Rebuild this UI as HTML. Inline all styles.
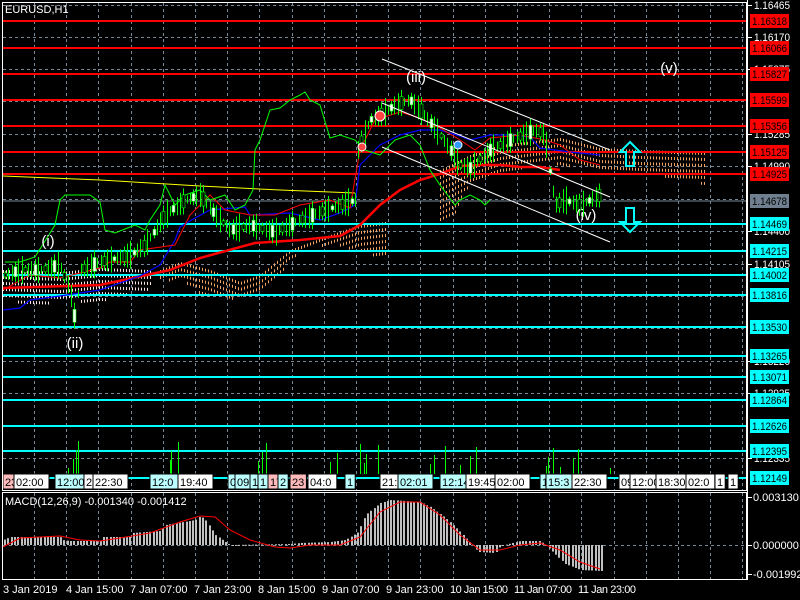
<!DOCTYPE html>
<html><head><meta charset="utf-8"><style>
html,body{margin:0;padding:0;background:#000;width:800px;height:600px;overflow:hidden}
svg{display:block;font-family:"Liberation Sans",sans-serif}
</style></head><body>
<svg id="s" width="800" height="600" viewBox="0 0 800 600" xmlns="http://www.w3.org/2000/svg">
<g id="grid" stroke="#778899" stroke-dasharray="3,3" stroke-width="1"></g>
<g id="cloud"></g>
<!-- horizontal levels -->
<g stroke-width="2">
<line x1="2" x2="747" y1="21" y2="21" stroke="#f00"/>
<line x1="2" x2="747" y1="48" y2="48" stroke="#f00"/>
<line x1="2" x2="747" y1="74" y2="74" stroke="#f00"/>
<line x1="2" x2="747" y1="100" y2="100" stroke="#f00"/>
<line x1="2" x2="747" y1="126" y2="126" stroke="#f00"/>
<line x1="2" x2="747" y1="152" y2="152" stroke="#f00"/>
<line x1="2" x2="747" y1="174" y2="174" stroke="#f00"/>
<line x1="2" x2="747" y1="224" y2="224" stroke="#0ff"/>
<line x1="2" x2="747" y1="251" y2="251" stroke="#0ff"/>
<line x1="2" x2="747" y1="275" y2="275" stroke="#0ff"/>
<line x1="2" x2="747" y1="295" y2="295" stroke="#0ff"/>
<line x1="2" x2="747" y1="327" y2="327" stroke="#0ff"/>
<line x1="2" x2="747" y1="356" y2="356" stroke="#0ff"/>
<line x1="2" x2="747" y1="377" y2="377" stroke="#0ff"/>
<line x1="2" x2="747" y1="400" y2="400" stroke="#0ff"/>
<line x1="2" x2="747" y1="426" y2="426" stroke="#0ff"/>
<line x1="2" x2="747" y1="451" y2="451" stroke="#0ff"/>
<line x1="2" x2="747" y1="478" y2="478" stroke="#0ff"/>
</g>
<line x1="2" x2="747" y1="201" y2="201" stroke="#778899" stroke-width="1"/>
<polyline points="3,176 100,180 200,186 280,190 355,193" fill="none" stroke="#ff0" stroke-width="1"/>
<polyline points="3,288 100,285 170,270 190,262 200,258 255,243 300,240 340,236 360,225 380,205 400,190 420,180 440,174 460,166 480,165 500,165 520,167 540,167 560,170" fill="none" stroke="#f00" stroke-width="2.5"/>
<polyline points="3,310 20,308 30,300 60,296 100,290 140,276 160,265 175,240 180,227 195,218 210,210 245,207 250,215 290,213 320,220 340,213 355,205 360,165 365,160 380,145 400,135 420,130 440,130 460,136 470,140 490,135 510,135 530,137 540,148 570,152 600,155" fill="none" stroke="#00f" stroke-width="1.2"/>
<polyline points="3,290 30,275 60,278 100,268 110,262 130,262 140,250 175,245 190,215 205,200 210,195 225,210 250,215 275,215 300,205 330,200 350,208 360,150 375,120 400,112 420,118 440,128 460,140 475,150 490,138 520,135 545,140 560,145 580,160 600,165" fill="none" stroke="#f00" stroke-width="1"/>
<polyline points="5,262 20,262 35,257 55,225 60,200 65,195 90,195 100,202 105,230 115,233 135,225 145,230 150,220 160,205 165,185 175,205 185,195 200,190 210,200 225,195 235,210 245,205 253,190 255,150 260,140 270,110 280,108 290,100 300,95 305,92 310,100 320,105 330,138 340,135 355,140 365,150 380,155 395,140 410,135 420,145 430,170 440,185 455,205 460,200 470,195 480,200 485,205 490,200" fill="none" stroke="#0f0" stroke-width="1"/>
<g id="candles"></g>
<g stroke="#fff" stroke-width="1">
<line x1="382" y1="59" x2="610" y2="150"/>
<line x1="382" y1="103" x2="610" y2="197"/>
<line x1="382" y1="147" x2="610" y2="242"/>
</g>
<path d="M630,142 L640,152 L634,152 L634,166 L626,166 L626,152 L620,152 Z" fill="none" stroke="#0ff" stroke-width="2"/>
<path d="M630,232 L640,222 L634,222 L634,208 L626,208 L626,222 L620,222 Z" fill="none" stroke="#0ff" stroke-width="2"/>
<circle cx="362" cy="147" r="4" fill="#f44" stroke="#fff"/><circle cx="380" cy="116" r="5" fill="#f44" stroke="#fff"/><circle cx="458" cy="145" r="4" fill="#39f" stroke="#fff"/>
<g fill="#fff" font-size="15" text-anchor="middle">
<text x="48" y="246">(i)</text><text x="75" y="348">(ii)</text><text x="416" y="82">(iii)</text><text x="586" y="220">(iv)</text><text x="669" y="73">(v)</text>
</g>
<text x="5" y="13" fill="#fff" font-size="11">EURUSD,H1</text>
<g id="vol" stroke="#0f0" stroke-width="1"></g>
<g id="strip"></g>
<g id="hist" fill="#c0c0c0"></g>
<polyline points="3,547 20,538 60,536 80,540 100,541 120,538 150,533 180,522 200,516 215,517 230,530 250,540 275,547 290,548 310,545 340,545 360,537 380,512 400,502 420,502 440,515 460,535 480,550 500,550 520,545 540,543 560,550 580,562 600,569" fill="none" stroke="#f00" stroke-width="1"/>
<text x="5" y="505" fill="#fff" font-size="11">MACD(12,26,9) -0.001340 -0.001412</text>
<rect x="2.5" y="2.5" width="744" height="488" fill="none" stroke="#fff"/>
<rect x="2.5" y="492.5" width="744" height="87" fill="none" stroke="#fff"/>
<g id="axis" font-size="11" fill="#fff"></g>
<g font-size="11" fill="#fff">
<text x="3" y="593">3 Jan 2019</text><text x="66" y="593">4 Jan 15:00</text><text x="130" y="593">7 Jan 07:00</text><text x="194" y="593">7 Jan 23:00</text><text x="258" y="593">8 Jan 15:00</text><text x="322" y="593">9 Jan 07:00</text><text x="386" y="593">9 Jan 23:00</text><text x="450" y="593" textLength="58">10 Jan 15:00</text><text x="514" y="593" textLength="58">11 Jan 07:00</text><text x="578" y="593" textLength="58">11 Jan 23:00</text>
</g>
</svg>
<script>
var NS="http://www.w3.org/2000/svg";
function el(p,t,a,txt){var e=document.createElementNS(NS,t);for(var k in a)e.setAttribute(k,a[k]);if(txt!=null)e.textContent=txt;document.getElementById(p).appendChild(e);return e;}
for(var x=34;x<747;x+=32.2){el("grid","line",{x1:Math.round(x)+.5,x2:Math.round(x)+.5,y1:3,y2:490});el("grid","line",{x1:Math.round(x)+.5,x2:Math.round(x)+.5,y1:493,y2:579});}
[5,37,69,101,134,166,199,231,264,296,328,361,393,425,458].forEach(function(y){el("grid","line",{x1:3,x2:747,y1:y+.5,y2:y+.5});});
el("grid","line",{x1:3,x2:747,y1:545.5,y2:545.5});
// clouds as dash fields
function cloud(top,bot,col){for(var x=top[0][0];x<=top[top.length-1][0];x+=3){var t=interp(top,x),b=interp(bot,x);for(var y=t;y<b;y+=6){el("cloud","rect",{x:x,y:y,width:1,height:3,fill:col});}}}
function interp(p,x){for(var i=1;i<p.length;i++){if(x<=p[i][0]){var a=p[i-1],b=p[i];return a[1]+(b[1]-a[1])*(x-a[0])/(b[0]-a[0]);}}return p[p.length-1][1];}
cloud([[160,270],[180,262],[210,270],[240,282],[260,275],[290,250],[330,235],[360,225],[385,222]],[[160,280],[180,278],[200,292],[230,298],[260,292],[300,250],[330,242],[360,250],[385,258]],"#f4a460");
cloud([[3,270],[60,272],[100,268],[150,270]],[[3,296],[30,305],[60,300],[100,300],[150,288]],"#ffe4e1");
cloud([[440,170],[470,155],[500,145],[560,138],[600,148],[640,150],[705,152]],[[440,222],[455,215],[470,180],[500,170],[550,162],[600,168],[640,170],[705,183]],"#f4a460");
// candles along price path
var price=[[5,275],[20,270],[40,270],[60,265],[70,290],[75,320],[80,270],[100,262],[130,255],[145,245],[165,215],[185,200],[200,195],[215,215],[230,230],[250,225],[275,232],[300,220],[320,212],[340,205],[355,200],[358,150],[370,120],[380,115],[395,105],[410,100],[420,110],[440,135],[460,165],[470,168],[490,150],[510,140],[535,130],[545,135],[550,175],[555,205],[565,200],[580,205],[590,200],[600,195]];
for(var x=5,i=0;x<=600;x+=3.3,i++){var y=interp(price,x);var h=4+((i*13)%11);var xx=Math.round(x)+.5;el("candles","line",{x1:xx,x2:xx,y1:y-h,y2:y+h,stroke:"#0f0"});if(i%3==0)el("candles","rect",{x:Math.round(x)-1,y:y-h/2,width:3,height:h,fill:(i%2?"#fff":"#000"),stroke:"#0f0","stroke-width":0.6});}
var vx=[68,73,76,78,170,171,178,258,262,266,330,337,360,364,366,378,430,434,445,460,470,476,546,548,553,560,573,578,610];
vx.forEach(function(x,i){var h=6+((i*37)%28);el("vol","line",{x1:x+.5,x2:x+.5,y1:474,y2:474-h});});
var labs=[[3,"23","#fbb"],[14,"02:00","#fff"],[55,"12:00","#bff"],[84,"2","#fff"],[93,"22:30","#fff"],[150,"12:0","#bff"],[178,"19:40","#fff"],[228,"0","#bff"],[235,"09","#bff"],[250,"1","#bff"],[258,"1","#bff"],[268,"17","#fbb"],[278,"2","#bff"],[290,"23","#fbb"],[308,"04:0","#fff"],[345,"1","#bff"],[380,"21:0","#fff"],[398,"02:01","#bff"],[440,"12:14","#bff"],[466,"19:45","#fff"],[495,"02:00","#fff"],[540,"12","#bff"],[546,"15:3","#bff"],[572,"22:30","#fff"],[619,"09","#fff"],[630,"12:00","#fff"],[656,"18:30","#fff"],[686,"02:0","#fff"],[715,"1","#fff"],[728,"1","#fff"]];
labs.forEach(function(l){var w=l[1].length*6.2+4;el("strip","rect",{x:l[0],y:474,width:w,height:15,fill:l[2],stroke:"#000"});el("strip","text",{x:l[0]+2,y:486,"font-size":"11",fill:"#000"},l[1]);});
var pts=[[3,540],[10,537],[60,537],[62,540],[70,541],[100,541],[102,537],[130,537],[132,533],[160,531],[165,525],[195,520],[200,516],[205,520],[215,535],[225,542],[230,545],[290,544],[300,543],[330,542],[345,540],[358,532],[365,515],[380,503],[390,500],[420,502],[430,507],[445,518],[460,532],[470,543],[478,552],[495,553],[500,546],[520,541],[540,541],[548,548],[565,564],[580,570],[603,571]];
for(var x=4;x<=603;x+=3.3){var y=interp(pts,x);var t=Math.min(y,545),h=Math.max(1,Math.abs(545-y));el("hist","rect",{x:Math.round(x),y:t,width:2,height:h});}
el("axis","line",{x1:747.5,x2:747.5,y1:0,y2:580,stroke:"#fff"});
[[5,"1.16465"],[37,"1.16170"],[69,"1.15875"],[134,"1.15285"],[166,"1.14990"],[231,"1.14400"],[264,"1.14105"],[361,"1.13220"],[393,"1.12925"],[458,"1.12335"]].forEach(function(a){el("axis","line",{x1:747,x2:752,y1:a[0]+.5,y2:a[0]+.5,stroke:"#fff"});el("axis","text",{x:754,y:a[0]+4,textLength:36,lengthAdjust:"spacingAndGlyphs"},a[1]);});
[[21,"1.16318","#f00"],[48,"1.16066","#f00"],[74,"1.15827","#f00"],[100,"1.15599","#f00"],[126,"1.15356","#f00"],[152,"1.15125","#f00"],[174,"1.14925","#f00"],[201,"1.14678","#708090"],[224,"1.14469","#0ff"],[251,"1.14215","#0ff"],[275,"1.14002","#0ff"],[295,"1.13816","#0ff"],[327,"1.13530","#0ff"],[356,"1.13265","#0ff"],[377,"1.13071","#0ff"],[400,"1.12864","#0ff"],[426,"1.12626","#0ff"],[451,"1.12395","#0ff"],[478,"1.12149","#0ff"]].forEach(function(a){el("axis","rect",{x:750,y:a[0]-7,width:39,height:14,fill:a[2]});el("axis","text",{x:752,y:a[0]+4,fill:"#000",textLength:35,lengthAdjust:"spacingAndGlyphs"},a[1]);});
[[497,"0.003130"],[545,"0.000000"],[574,"-0.001992"]].forEach(function(a){el("axis","line",{x1:747,x2:752,y1:a[0]+.5,y2:a[0]+.5,stroke:"#fff"});el("axis","text",{x:753,y:a[0]+4},a[1]);});
</script>
</body></html>
